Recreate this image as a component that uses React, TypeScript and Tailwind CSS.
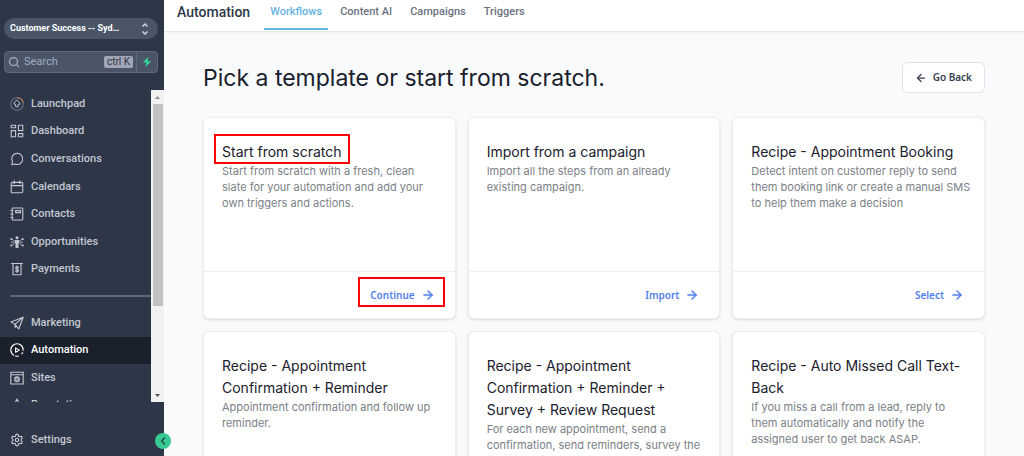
import type { ReactNode } from 'react';
import { ArrowLeft, ArrowRight, ChevronLeft, Search, Settings } from 'lucide-react';
import clsx from 'clsx';

interface NavItem {
    label: string;
    icon: ReactNode;
    active?: boolean;
}

interface Template {
    title: string;
    description: string;
    action: string;
    highlighted?: boolean;
}

function NavIcon({ children }: { children: ReactNode }) {
    return (
        <svg
            viewBox="0 0 14 14"
            className="size-3.5 shrink-0"
            fill="none"
            stroke="currentColor"
            strokeWidth="1.1"
            strokeLinecap="round"
            strokeLinejoin="round"
            aria-hidden="true"
        >
            {children}
        </svg>
    );
}

const primaryItems: NavItem[] = [
    {
        label: 'Launchpad',
        icon: (
            <NavIcon>
                <circle cx="7" cy="7" r="6.3" stroke="#6b7486" />
                <path d="M7.5.7A6.3 6.3 0 0 1 13.1 5" stroke="#c97b55" />
                <path d="M7 3.2 10 6.2v1H8.3v2.6H5.7V7.2H4v-1z" strokeWidth="0.9" />
            </NavIcon>
        ),
    },
    {
        label: 'Dashboard',
        icon: (
            <NavIcon>
                <path d="M1.2 1.2h4.4v2.6H1.2zM1.2 6.6h4.4v6.2H1.2zM8.4 1.2h4.4v5.4H8.4zM8.4 9.6h4.4v3.2H8.4z" strokeLinejoin="miter" />
            </NavIcon>
        ),
    },
    {
        label: 'Conversations',
        icon: (
            <NavIcon>
                <path d="M7.2 1.3a5.6 5.6 0 1 1-2.4 10.7l-3.1.8.8-3A5.6 5.6 0 0 1 7.2 1.3z" />
            </NavIcon>
        ),
    },
    {
        label: 'Calendars',
        icon: (
            <NavIcon>
                <path d="M2.4 2.4h9.2q1.2 0 1.2 1.2v8q0 1.2-1.2 1.2H2.4q-1.2 0-1.2-1.2v-8q0-1.2 1.2-1.2zM1.2 5.6h11.6M4.2.8v3M9.8.8v3" />
            </NavIcon>
        ),
    },
    {
        label: 'Contacts',
        icon: (
            <NavIcon>
                <path d="M3 1h9q.8 0 .8.8v10.4q0 .8-.8.8H3q-.8 0-.8-.8V1.8Q2.2 1 3 1zM5.6 3.6h5v2h-5zM.8 3.5H3M.8 7H3M.8 10.5H3" />
            </NavIcon>
        ),
    },
    {
        label: 'Opportunities',
        icon: (
            <NavIcon>
                <g fill="currentColor" stroke="none">
                    <circle cx="7" cy="2.8" r="1.5" />
                    <path d="M4.6 5h4.8v3.4h-.9V13h-3V8.4h-.9z" />
                    <circle cx="1.2" cy="4" r="1" />
                    <circle cx="1.2" cy="10.5" r="1" />
                    <circle cx="12.8" cy="4" r="1" />
                    <circle cx="12.8" cy="10.5" r="1" />
                </g>
                <path d="M1.5 7.2h2M10.5 7.2h2M2 4.3l1.5 1M12 4.3l-1.5 1M2 10.2l1.5-1M12 10.2l-1.5-1" strokeWidth="0.9" />
            </NavIcon>
        ),
    },
    {
        label: 'Payments',
        icon: (
            <NavIcon>
                <path d="M1.5 1.5h11M3 1.5v11.3h8V1.5" />
                <path d="M8.5 5.4q-.4-.7-1.5-.7-1.4 0-1.4 1.1T7 7.1q1.5.2 1.5 1.3T7 9.5q-1.2 0-1.6-.8M7 3.9v6.5" />
            </NavIcon>
        ),
    },
];

const secondaryItems: NavItem[] = [
    {
        label: 'Marketing',
        icon: (
            <NavIcon>
                <path d="M13.2 1.2.9 5.900l4 2.500 3.900 4.600zM13.200 1.200 4.900 8.400M4.900 8.400l.3 3 1.500-1.200" />
            </NavIcon>
        ),
    },
    {
        label: 'Automation',
        active: true,
        icon: (
            <NavIcon>
                <path d="M3.6 12.2A6.2 6.2 0 1 1 13.2 7.3M5.6 13q1.4.4 2.8 0M12.6 9.7l-.8 1.2" />
                <path d="M5.6 4.9v4.4l3.7-2.2z" />
            </NavIcon>
        ),
    },
    {
        label: 'Sites',
        icon: (
            <NavIcon>
                <path d="M.8 1.2h12.4V13H.8zM.8 3.7h12.4" strokeLinejoin="miter" />
                <circle cx="7" cy="8.3" r="2.4" />
                <path d="M7 6v4.6M5.9 6.5v3.6M8.1 6.5v3.6" strokeWidth="0.8" />
            </NavIcon>
        ),
    },
    {
        label: 'Reputation',
        icon: (
            <NavIcon>
                <path d="M7 1l1.8 3.8 4.2.6-3 2.9.7 4.2-3.7-2-3.7 2 .7-4.2-3-2.9 4.2-.6z" />
            </NavIcon>
        ),
    },
];

const tabs = ['Workflows', 'Content AI', 'Campaigns', 'Triggers'];

const templates: Template[] = [
    {
        title: 'Start from scratch',
        description: 'Start from scratch with a fresh, clean\nslate for your automation and add your own triggers and actions.',
        action: 'Continue',
        highlighted: true,
    },
    {
        title: 'Import from a campaign',
        description: 'Import all the steps from an already existing campaign.',
        action: 'Import',
    },
    {
        title: 'Recipe - Appointment Booking',
        description: 'Detect intent on customer reply to send them booking link or create a manual SMS to help them make a decision',
        action: 'Select',
    },
    {
        title: 'Recipe - Appointment Confirmation + Reminder',
        description: 'Appointment confirmation and follow up reminder.',
        action: 'Select',
    },
    {
        title: 'Recipe - Appointment Confirmation + Reminder + Survey + Review Request',
        description: 'For each new appointment, send a confirmation, send reminders, survey the result and if the result was good send a review request.',
        action: 'Select',
    },
    {
        title: 'Recipe - Auto Missed Call Text-Back',
        description: 'If you miss a call from a lead, reply to them automatically and notify the assigned user to get back ASAP.',
        action: 'Select',
    },
];

function NavLink({ item }: { item: NavItem }) {
    return (
        <a
            href="#"
            className={clsx(
                'flex flex-1 items-center gap-[7px] pl-2.5 text-[11px] leading-4 font-medium',
                item.active ? 'bg-[#1a202c] text-white' : 'text-[#c3c8d1]'
            )}
        >
            {item.icon}
            {item.label}
        </a>
    );
}

function Sidebar() {
    return (
        <aside className="relative z-10 flex w-[164px] shrink-0 flex-col bg-[#2d3748] pt-[18px] font-['Roboto',sans-serif]">
            <button
                type="button"
                className="mr-1.5 ml-1 flex h-[21px] items-center justify-between rounded-full bg-[#4a5568] pr-2 pl-1.5 text-[9px] font-bold whitespace-nowrap text-white"
            >
                Customer Success -- Syd…
                <svg viewBox="0 0 10 14" className="h-3.5 w-2.5 shrink-0" fill="none" stroke="#cbd5e0" strokeWidth="1.5" aria-hidden="true">
                    <path d="M2.5 4.5 5 2l2.5 2.5M2.5 9.5 5 12l2.5-2.5" />
                </svg>
            </button>

            <div className="mt-3 mr-1.5 ml-1 flex h-[22px] rounded border border-[#5d6879] bg-[#4a5568]">
                <label className="flex min-w-0 flex-1 items-center gap-1 px-[3px]">
                    <Search className="size-3 shrink-0 text-[#a0aec0]" strokeWidth={2.5} />
                    <input
                        type="search"
                        aria-label="Search"
                        placeholder="Search"
                        className="w-0 min-w-0 flex-1 bg-transparent text-[11px] text-white outline-none placeholder:text-[#a0aec0]"
                    />
                    <kbd className="rounded-xs bg-[#a0a6b4] px-[3px] font-['Roboto',sans-serif] text-[10px] leading-3 text-[#2d3748]">ctrl K</kbd>
                </label>
                <button type="button" aria-label="Quick actions" className="flex w-[21px] items-center justify-center border-l border-[#5d6879]">
                    <svg viewBox="0 0 10 10" className="size-2.5" fill="#34d399" aria-hidden="true">
                        <path d="M6.2 0 .8 5.6h3.4L3.5 10l5.7-5.7H5.7z" />
                    </svg>
                </button>
            </div>

            <div className="mt-[17px] flex min-h-0 flex-1">
                <nav className="min-w-0 flex-1 overflow-hidden">
                    <div className="flex h-[193px] flex-col">
                        {primaryItems.map(item => (
                            <NavLink key={item.label} item={item} />
                        ))}
                    </div>
                    <hr className="my-3 ml-2.5 border-t-2 border-[#5f697a]" />
                    <div className="flex h-[110px] flex-col">
                        {secondaryItems.map(item => (
                            <NavLink key={item.label} item={item} />
                        ))}
                    </div>
                </nav>
                <div className="flex w-[13px] flex-col items-center justify-between bg-[#f1f1f1]" aria-hidden="true">
                    <svg viewBox="0 0 13 14" className="h-3.5 w-full shrink-0" fill="#8a8a8a">
                        <path d="M4 9l2.5-3L9 9z" />
                    </svg>
                    <div className="mb-auto h-[202px] w-2.5 bg-[#c1c1c1]" />
                    <svg viewBox="0 0 13 14" className="h-3.5 w-full shrink-0" fill="#505050">
                        <path d="M4 6l2.5 3L9 6z" />
                    </svg>
                </div>
            </div>

            <div className="pt-6 pb-[3px]">
                <div className="flex h-[27px]">
                    <NavLink item={{ label: 'Settings', icon: <Settings className="size-3.5 shrink-0" strokeWidth={2} /> }} />
                </div>
            </div>

            <button
                type="button"
                aria-label="Collapse sidebar"
                className="absolute -right-[7px] bottom-[7px] flex size-4 items-center justify-center rounded-full bg-[#37ca92] text-[#234b4b]"
            >
                <ChevronLeft className="size-3" strokeWidth={3} />
            </button>
        </aside>
    );
}

function TopBar() {
    return (
        <header className="flex h-8 shrink-0 border-b border-[#e5e7eb] bg-white font-['Roboto',sans-serif] shadow-xs">
            <h2 className="mr-3.5 ml-[13px] text-[14px] leading-6 font-medium text-[#2d3748]">Automation</h2>
            <nav className="flex h-[30px] gap-1.5">
                {tabs.map((tab, i) => (
                    <a
                        key={tab}
                        href="#"
                        className={clsx(
                            'border-b-2 px-1.5 text-[11px] leading-6 font-medium',
                            i === 0 ? 'border-[#63b3e4] text-[#63b3e4]' : 'border-transparent text-[#6b7280]'
                        )}
                    >
                        {tab}
                    </a>
                ))}
            </nav>
        </header>
    );
}

function TemplateCard({ template }: { template: Template }) {
    return (
        <article className="flex flex-col rounded-md border border-[#edeff2] bg-white shadow-sm">
            <div className="min-h-[153px] flex-1 pt-[23px] pr-2.5 pl-[18px]">
                <h3 className="text-[14px] leading-[22px] text-[#1a202c]">
                    <span className="relative">
                        {template.title}
                        {template.highlighted && (
                            <span className="absolute -inset-x-2 -top-[9px] -bottom-1 border-2 border-[#fb0007]" />
                        )}
                    </span>
                </h3>
                <p className="text-[11px] leading-4 whitespace-pre-line text-[#7b8086]">{template.description}</p>
            </div>
            <div className="flex h-[47px] items-center justify-end border-t border-[#edeff2] pr-5">
                <button
                    type="button"
                    className="relative flex items-center gap-1.5 font-['Noto_Sans',sans-serif] text-[10px] leading-4 font-semibold text-[#5080ee]"
                >
                    {template.action}
                    <ArrowRight className="size-3.5" strokeWidth={2.5} />
                    {template.highlighted && (
                        <span className="absolute -top-[10px] -right-2.5 -bottom-1 -left-3 border-2 border-[#fb0007]" />
                    )}
                </button>
            </div>
        </article>
    );
}

export default function App() {
    return (
        <div className="flex h-screen overflow-hidden bg-[#f9fafc]">
            <Sidebar />
            <div className="flex min-w-0 flex-1 flex-col">
                <TopBar />
                <main className="min-h-0 flex-1 overflow-hidden px-[39px] pt-[30px] font-['Inter',sans-serif]">
                    <div className="mb-6 flex items-center justify-between">
                        <h1 className="text-[23px] leading-7 text-[#1a202c]">Pick a template or start from scratch.</h1>
                        <button
                            type="button"
                            className="flex h-[31px] items-center gap-1.5 rounded-md border border-[#dfe2e8] bg-white px-3 font-['Noto_Sans',sans-serif] text-[10px] font-semibold text-[#374151]"
                        >
                            <ArrowLeft className="size-3" strokeWidth={2.5} />
                            Go Back
                        </button>
                    </div>
                    <div className="grid grid-cols-3 gap-3">
                        {templates.map(template => (
                            <TemplateCard key={template.title} template={template} />
                        ))}
                    </div>
                </main>
            </div>
        </div>
    );
}
